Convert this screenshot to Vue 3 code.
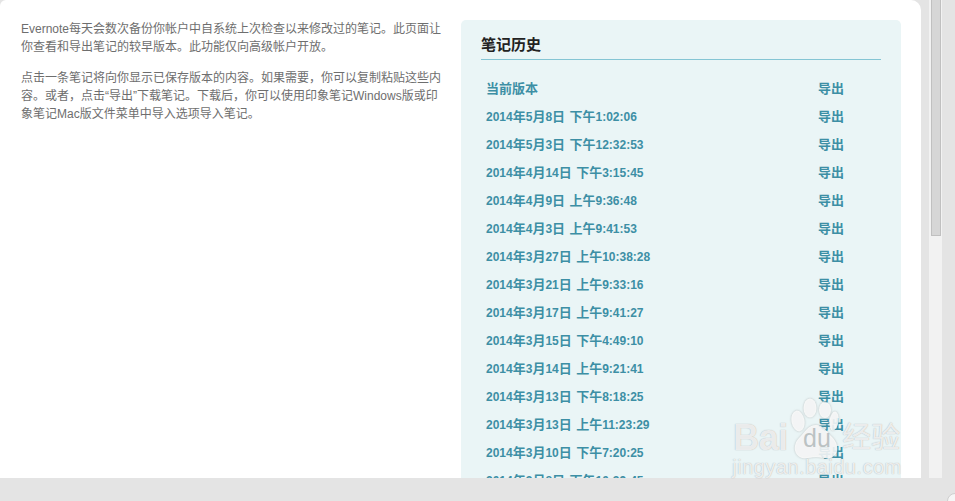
<script setup>
const rows = [
  '当前版本',
  '2014年5月8日 下午1:02:06',
  '2014年5月3日 下午12:32:53',
  '2014年4月14日 下午3:15:45',
  '2014年4月9日 上午9:36:48',
  '2014年4月3日 上午9:41:53',
  '2014年3月27日 上午10:38:28',
  '2014年3月21日 上午9:33:16',
  '2014年3月17日 上午9:41:27',
  '2014年3月15日 下午4:49:10',
  '2014年3月14日 上午9:21:41',
  '2014年3月13日 下午8:18:25',
  '2014年3月13日 上午11:23:29',
  '2014年3月10日 下午7:20:25',
  '2014年3月8日 下午10:39:45',
].map((label) => ({
  label,
  parts: label.split(/([\u4e00-\u9fa5]+)/).filter(Boolean).map((text) => ({
    text,
    cjk: /[\u4e00-\u9fa5]/.test(text),
  })),
}))
</script>

<template>
  <div class="page">
    <div class="top">
      <main class="panel">
        <section class="intro">
          <p>Evernote每天会数次备份你帐户中自系统上次检查以来修改过的笔记。此页面让你查看和导出笔记的较早版本。此功能仅向高级帐户开放。</p>
          <p>点击一条笔记将向你显示已保存版本的内容。如果需要，你可以复制粘贴这些内容。或者，点击“导出”下载笔记。下载后，你可以使用印象笔记Windows版或印象笔记Mac版文件菜单中导入选项导入笔记。</p>
        </section>
        <aside class="history">
          <h2>笔记历史</h2>
          <ul>
            <li v-for="row in rows" :key="row.label">
              <span class="date"><span v-for="(p, i) in row.parts" :key="i" :class="{ cjk: p.cjk }">{{ p.text }}</span></span>
              <span class="export cjk">导出</span>
            </li>
          </ul>
        </aside>
      </main>
      <div class="track"><div class="thumb"></div></div>
    </div>
    <div class="foot"></div>
    <div class="corner"></div>
    <div class="mark">
      <svg class="paw" width="50" height="64" viewBox="0 0 50 64">
        <ellipse cx="7" cy="23" rx="6.5" ry="10.5" transform="rotate(-10 7 23)" />
        <ellipse cx="19" cy="10" rx="6.5" ry="9.5" />
        <ellipse cx="34" cy="12" rx="6" ry="8" />
        <ellipse cx="43" cy="23" rx="4.5" ry="9.5" transform="rotate(8 43 23)" />
        <path d="M25 27c7 0 10 6 16 12 7 7 8 18-2 21-5 1-9-1-14-1-5 0-9 2-14 1-9-3-9-14-3-20 6-6 9-13 17-13z" />
      </svg>
      <div class="mark-main"><span class="bai">Bai</span><span class="du">du</span><span class="jy">经验</span></div>
      <div class="mark-url">jingyan.baidu.com</div>
    </div>
  </div>
</template>

<style>
html, body { margin: 0; overflow: hidden; }
</style>

<style scoped>
.page {
  position: relative;
  width: 955px;
  height: 501px;
  overflow: hidden;
  background: #e4e4e4;
  display: flex;
  flex-direction: column;
  font-family: "Liberation Sans", "Noto Sans CJK SC", sans-serif;
}
.top { display: flex; height: 478px; }
.panel {
  width: 921px;
  box-sizing: border-box;
  background: #fff;
  border-top-right-radius: 10px;
  border-top-left-radius: 6px;
  padding: 20px 20px 0 21px;
  display: flex;
  justify-content: space-between;
  overflow: hidden;
}
.intro { width: 422px; font-size: 12px; line-height: 18px; color: #6e6e6e; }
.intro p { margin: 0 0 13px; }
.history {
  width: 440px;
  height: 500px;
  box-sizing: border-box;
  background: #eaf5f6;
  border-radius: 5px;
  padding: 14px 20px 0;
}
h2 {
  margin: 0;
  height: 25px;
  line-height: 22px;
  font-size: 15px;
  font-weight: 700;
  color: #222;
  border-bottom: 1px solid #85c5d4;
}
ul { margin: 15px 0 0; padding: 0 0 0 5px; list-style: none; }
li {
  height: 28px;
  line-height: 28px;
  display: flex;
  font-size: 12px;
  font-weight: 700;
  word-spacing: 1px;
  color: #3d8fa5;
}
.cjk { font-size: 13px; }
.date { width: 332px; }
.track {
  margin-left: 8px;
  width: 13px;
  background: #f2f2f2;
}
.thumb {
  width: 10px;
  height: 236px;
  margin-left: 2px;
  box-sizing: border-box;
  background: #d6d6d6;
  border: 1px solid #c0c0c0;
  border-top: 0;
}
.foot { flex: 1; }
.corner {
  position: absolute;
  right: -8px;
  bottom: -8px;
  width: 16px;
  height: 16px;
  border-radius: 50%;
  background: #f6f6f6;
  border: 1px solid #cfcfcf;
  box-sizing: border-box;
}
.mark {
  position: absolute;
  left: 732px;
  top: 398px;
  width: 172px;
  height: 84px;
  color: rgba(255, 255, 255, 0.8);
  text-shadow: 0 0 1px rgba(130, 130, 130, 0.7);
}
.paw {
  position: absolute;
  left: 59px;
  top: 0;
  fill: rgba(255, 255, 255, 0.82);
  filter: drop-shadow(0 0 1px rgba(140, 140, 140, 0.6));
}
.mark-main {
  position: absolute;
  left: 0;
  top: 22px;
  width: 172px;
  height: 36px;
  line-height: 36px;
}
.mark-main span { position: absolute; top: 0; }
.bai { left: 1px; font-size: 36px; font-weight: 700; letter-spacing: -0.5px; }
.du { left: 71px; font-size: 25px; color: rgba(150, 160, 162, 0.6); text-shadow: none; }
.jy { left: 110px; font-size: 29px; }
.mark-url {
  position: absolute;
  left: 0;
  top: 58px;
  font-size: 20px;
  line-height: 22px;
  letter-spacing: 0.5px;
}
</style>
